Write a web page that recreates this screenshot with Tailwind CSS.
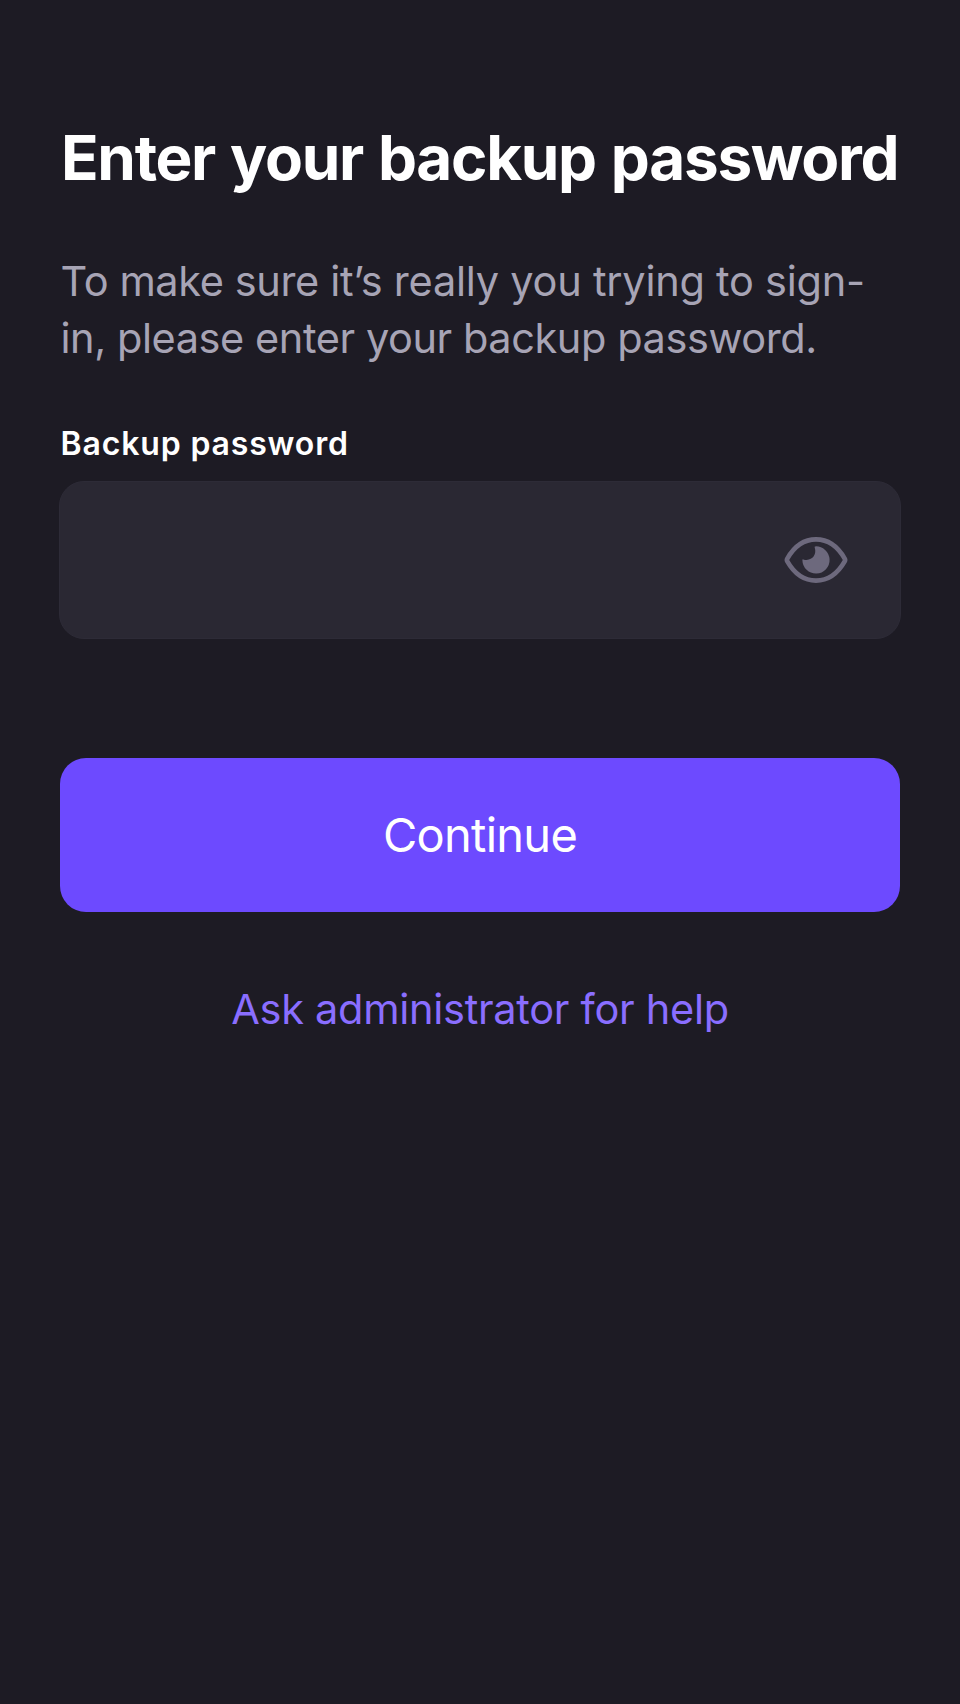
<!DOCTYPE html>
<html lang="en">
<head>
<meta charset="utf-8">
<title>Enter your backup password</title>
<script src="https://cdn.jsdelivr.net/npm/@tailwindcss/browser@4"></script>
</head>
<body class="min-h-screen bg-[#1d1b24] font-['Inter',sans-serif] antialiased">
<main class="flex flex-col px-[60px] pt-[122px]">
  <h1 class="ml-[1px] h-[72px] text-[62px] leading-[72px] font-bold tracking-[-1.3px] whitespace-nowrap text-white [word-spacing:1.6px]">Enter your backup password</h1>
  <p class="mt-[59px] ml-[0.5px] text-[41.5px] leading-[57px] whitespace-nowrap text-[#a7a4b5]">
    <span class="tracking-[-0.4px]">To make sure</span><span class="tracking-[-0.24px]"> it’s really you trying to sign-</span><br><span class="tracking-[-0.43px]">in, please enter your backup password.</span>
  </p>
  <label for="password" class="mt-[57px] ml-[0.5px] h-10 text-[32px] leading-10 font-semibold tracking-[0.85px] text-white">Backup password</label>
  <div class="-mx-[1px] mt-[17px] flex h-[158px] items-center rounded-[25px] border border-[#2d2b37] bg-[#2a2833] pr-[52px] pl-12">
    <input id="password" type="password" class="min-w-0 flex-1 bg-transparent text-[42px] text-white outline-none">
    <button type="button" aria-label="Show password" class="h-[48px] w-[64px]">
      <svg class="block h-full w-full" viewBox="0 0 64 48" fill="none">
        <path d="M3.300 22.600C10.500 10 20 3.400 32 3.400S53.500 10 60.700 22.600Q61.500 24 60.700 25.400C53.500 38 44 44.600 32 44.600S10.500 38 3.300 25.400Q2.500 24 3.300 22.600Z" stroke="#6d697d" stroke-width="4.700" stroke-linejoin="round"/>
        <path d="M31.200 10.400A13.600 13.600 0 1 1 18.400 24.200Q18.300 23.200 19.300 23.400C27 25.800 33.300 19.500 30.700 11.600Q30.300 10.500 31.200 10.400Z" fill="#6d697d"/>
      </svg>
    </button>
  </div>
  <button type="button" class="mt-[119px] h-[154px] rounded-[26px] bg-[#6d4aff] text-[47px] leading-[154px] tracking-[-0.72px] text-white">Continue</button>
  <a href="#" class="mt-[69px] self-center text-[41.5px] leading-[57px] tracking-[-0.28px] text-[#8a6eff]">Ask administrator for help</a>
</main>
</body>
</html>
